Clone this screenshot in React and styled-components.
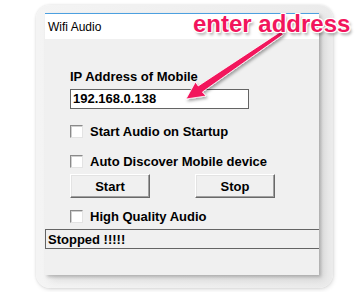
import React from 'react';
import styled, { createGlobalStyle } from 'styled-components';

const GlobalStyle = createGlobalStyle`
  html, body {
    margin: 0;
    padding: 0;
    background: #ffffff;
  }
  body {
    font-family: 'Liberation Sans', Arial, sans-serif;
  }
`;

const Page = styled.div`
  position: relative;
  width: 363px;
  height: 292px;
  padding: 5px 0 0 36px;
  box-sizing: border-box;
`;

const Frame = styled.div`
  width: 297px;
  height: 283px;
  box-sizing: border-box;
  padding: 8px 14px 13px 9px;
  border-radius: 14px;
  background: linear-gradient(to right, #f4f4f4 0%, #ebebeb 100%);
  box-shadow: 0 0 3px rgba(0, 0, 0, 0.12), 1px 2px 4px rgba(0, 0, 0, 0.1);
`;

const Window = styled.div`
  width: 274px;
  height: 262px;
  display: flex;
  flex-direction: column;
  background: #f0f0f0;
  border-top: 1px solid #4ca0e0;
  box-sizing: border-box;
  box-shadow: 2px 2px 3px rgba(0, 0, 0, 0.2), 5px 5px 8px rgba(0, 0, 0, 0.1);
`;

const TitleBar = styled.div`
  height: 25px;
  background: #ffffff;
  display: flex;
  align-items: center;
  padding-left: 3px;
  font-size: 12px;
  color: #000;
`;

const Body = styled.div`
  flex: 1;
  display: flex;
  flex-direction: column;
`;

const Controls = styled.div`
  display: flex;
  flex-direction: column;
  padding-left: 25px;
  padding-top: 30px;
`;

const Label = styled.div`
  font-size: 13px;
  font-weight: bold;
  line-height: 15px;
  color: #000;
`;

const TextBox = styled.div`
  margin-top: ${p => p.$mt || 0}px;
  width: 179px;
  height: 20px;
  box-sizing: border-box;
  border: 1px solid #646464;
  background: #fff;
  padding-left: 2px;
  font-size: 13px;
  font-weight: bold;
  line-height: 18px;
`;

const CheckRow = styled.label`
  margin-top: ${p => p.$mt || 0}px;
  display: flex;
  align-items: center;
  gap: 7px;
  height: 15px;
  font-size: 13px;
  font-weight: bold;
  color: #000;
`;

const Box = styled.span`
  width: 13px;
  height: 13px;
  box-sizing: border-box;
  background: #fff;
  border: 1px solid;
  border-color: #8a8a8a #e3e3e3 #e3e3e3 #8a8a8a;
  box-shadow: inset 1px 1px 0 #d0d0d0;
`;

const ButtonRow = styled.div`
  margin-top: ${p => p.$mt || 0}px;
  display: flex;
  gap: 45px;
`;

const Button = styled.div`
  width: 80px;
  height: 24px;
  box-sizing: border-box;
  display: flex;
  align-items: center;
  justify-content: center;
  background: #f0f0f0;
  border: 1px solid;
  border-color: #ffffff #696969 #696969 #ffffff;
  box-shadow: inset -1px -1px 0 #a0a0a0, inset 1px 1px 0 #e3e3e3;
  font-size: 13px;
  font-weight: bold;
  color: #000;
`;

const StatusBar = styled.div`
  margin-top: 5px;
  height: 20px;
  box-sizing: border-box;
  border: 1px solid #646464;
  border-right: none;
  padding-left: 2px;
  display: flex;
  align-items: center;
  font-size: 13px;
  font-weight: bold;
  color: #000;
`;

const Callout = styled.div`
  position: absolute;
  left: 193px;
  top: 10px;
  font-size: 24px;
  line-height: 28px;
  font-weight: bold;
  color: #f2145c;
  white-space: nowrap;
  text-shadow:
    1px 0 0 #fff, -1px 0 0 #fff, 0 1px 0 #fff, 0 -1px 0 #fff,
    1px 1px 0 #fff, -1px -1px 0 #fff, 1px -1px 0 #fff, -1px 1px 0 #fff,
    2px 3px 3px rgba(0, 0, 0, 0.35);
`;

const ArrowLayer = styled.svg`
  position: absolute;
  left: 0;
  top: 0;
  pointer-events: none;
  overflow: visible;
`;

function Arrow() {
  return (
    <ArrowLayer width="363" height="292" viewBox="0 0 363 292">
      <defs>
        <filter id="arrowShadow" x="-20%" y="-20%" width="140%" height="140%">
          <feDropShadow dx="1.5" dy="2" stdDeviation="1.5" floodColor="#000" floodOpacity="0.35" />
        </filter>
      </defs>
      <polygon
        points="186,99 195.5,82 198.2,86 281,31.4 283.2,34.6 202.4,92 206,96"
        fill="#f2145c"
        stroke="#fff"
        strokeWidth="0.8"
        strokeLinejoin="round"
        filter="url(#arrowShadow)"
      />
    </ArrowLayer>
  );
}

export default function App() {
  return (
    <>
      <GlobalStyle />
      <Page>
        <Frame>
          <Window>
            <TitleBar>Wifi Audio</TitleBar>
            <Body>
              <Controls>
                <Label>IP Address of Mobile</Label>
                <TextBox $mt={5}>192.168.0.138</TextBox>
                <CheckRow $mt={15}><Box />Start Audio on Startup</CheckRow>
                <CheckRow $mt={15}><Box />Auto Discover Mobile device</CheckRow>
                <ButtonRow $mt={5}>
                  <Button>Start</Button>
                  <Button>Stop</Button>
                </ButtonRow>
                <CheckRow $mt={11}><Box />High Quality Audio</CheckRow>
              </Controls>
              <StatusBar>Stopped !!!!!</StatusBar>
            </Body>
          </Window>
        </Frame>
        <Arrow />
        <Callout>enter address</Callout>
      </Page>
    </>
  );
}
